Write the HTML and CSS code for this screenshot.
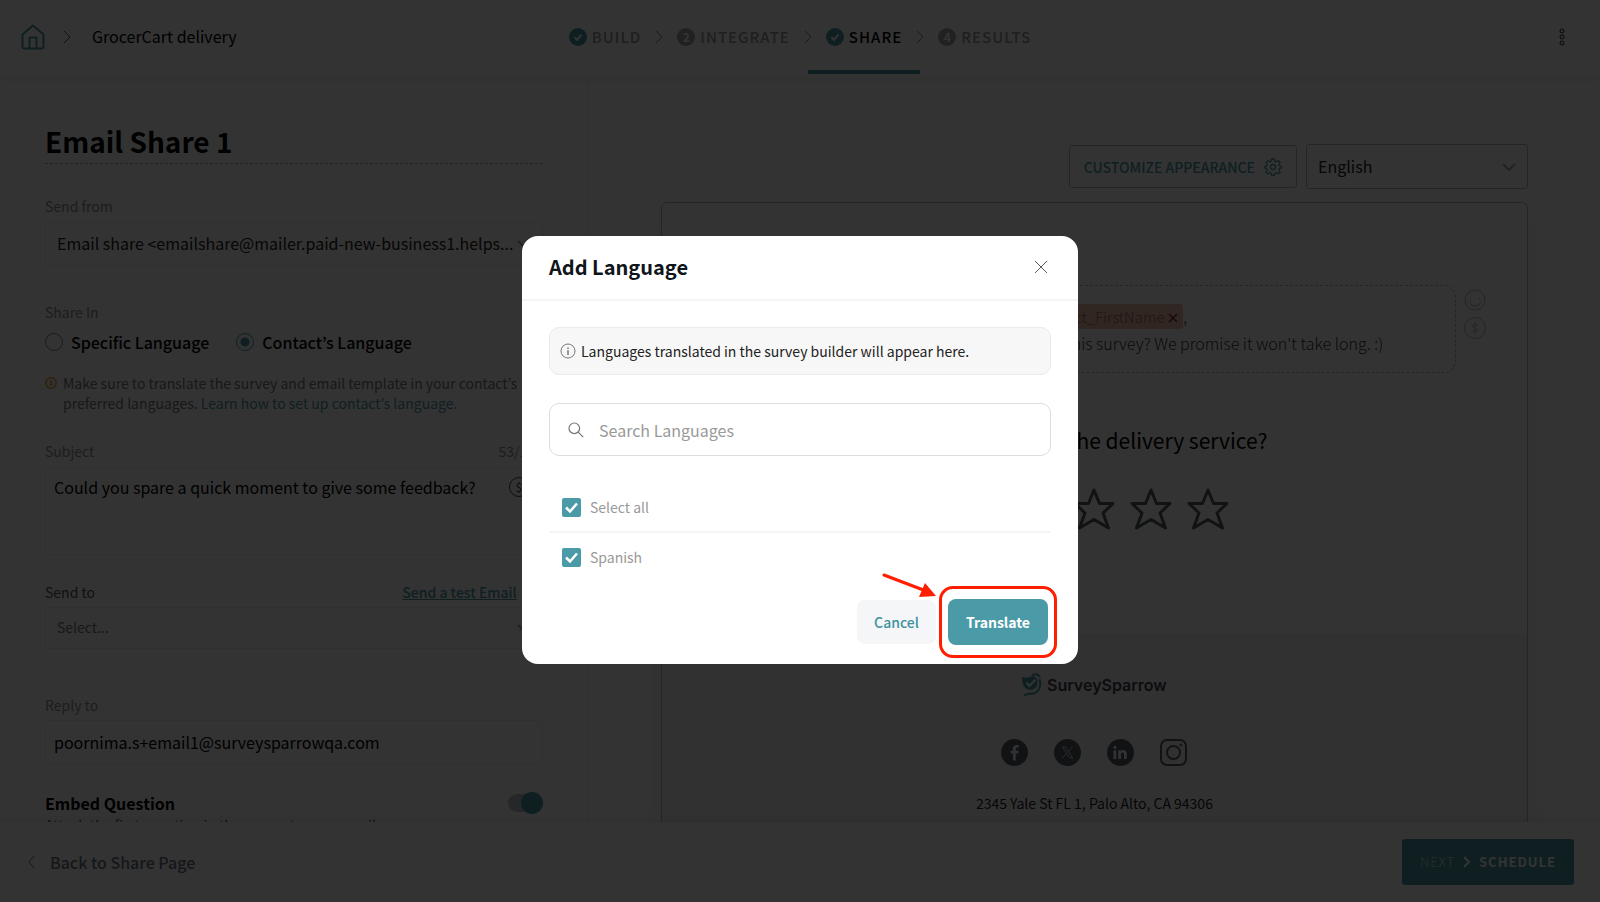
FILE: index.html
```html
<!doctype html>
<html lang="en">
  <head>
    <title>Email Share 1 - GrocerCart delivery</title>
    <meta charset="utf-8">
    <meta name="viewport" content="width=device-width, initial-scale=1">
    <link rel="stylesheet" href="styles.css">
  </head>
  <body>
    <header class="hd-bar">
      <div class="hd-crumbs">
        <a class="hd-home" href="#" aria-label="Home">
          <svg width="24" height="26" viewBox="0 0 24 26" fill="none" stroke="currentColor" stroke-width="2" stroke-linejoin="round"><path d="M1.500 10.500 12 1.500l10.500 9v12a2 2 0 0 1-2 2h-17a2 2 0 0 1-2-2z"/><path d="M8.500 24.500v-11h7v11"/></svg>
        </a>
        <svg class="hd-sep" width="8" height="14" viewBox="0 0 8 14" fill="none" stroke="currentColor"><path d="m1 1 6 6-6 6"/></svg>
        <span class="hd-name">GrocerCart delivery</span>
      </div>
      <nav class="st-steps">
        <a class="st-step" href="#">
          <svg class="st-done" width="18" height="18" viewBox="0 0 18 18"><circle cx="9" cy="9" r="9" fill="currentColor"/><path d="m5.500 9.300 2.500 2.400 4.500-5" fill="none" stroke="#fff" stroke-width="2"/></svg>
          BUILD
        </a>
        <svg class="st-sep" width="8" height="14" viewBox="0 0 8 14" fill="none" stroke="currentColor"><path d="m1 1 6 6-6 6"/></svg>
        <a class="st-step" href="#"><span class="st-num">2</span>INTEGRATE</a>
        <svg class="st-sep" width="8" height="14" viewBox="0 0 8 14" fill="none" stroke="currentColor"><path d="m1 1 6 6-6 6"/></svg>
        <a class="st-step st-current" href="#">
          <svg class="st-done" width="18" height="18" viewBox="0 0 18 18"><circle cx="9" cy="9" r="9" fill="currentColor"/><path d="m5.500 9.300 2.500 2.400 4.500-5" fill="none" stroke="#fff" stroke-width="2"/></svg>
          SHARE
        </a>
        <svg class="st-sep" width="8" height="14" viewBox="0 0 8 14" fill="none" stroke="currentColor"><path d="m1 1 6 6-6 6"/></svg>
        <a class="st-step" href="#"><span class="st-num">4</span>RESULTS</a>
      </nav>
      <button class="hd-more" type="button" aria-label="More">
        <svg width="6" height="18" viewBox="0 0 6 18" fill="none" stroke="currentColor"><circle cx="3" cy="3" r="2"/><circle cx="3" cy="9" r="2"/><circle cx="3" cy="15" r="2"/></svg>
      </button>
    </header>

    <main class="pg-main">
      <form class="fm-panel">
        <h1 class="fm-title">Email Share 1</h1>

        <div class="fm-row">
          <label for="from">Send from</label>
        </div>
        <div class="fm-select">
          <select id="from" class="fm-control">
            <option>Email share &lt;emailshare@mailer.paid-new-business1.helps...</option>
          </select>
          <svg width="14" height="8" viewBox="0 0 14 8" fill="none" stroke="currentColor" stroke-width="2"><path d="m1 1 6 6 6-6"/></svg>
        </div>

        <fieldset class="fm-share">
          <legend>Share In</legend>
          <div class="fm-radios">
            <label><input type="radio" name="share"> Specific Language</label>
            <label><input type="radio" name="share" checked> Contact’s Language</label>
          </div>
        </fieldset>
        <p class="fm-note">
          <svg width="12" height="12" viewBox="0 0 12 12" fill="none" stroke="currentColor" stroke-width="1.500"><circle cx="6" cy="6" r="5.200"/><path d="M7.500 4.300H5.200v1.600h1.700v1.700H4.500M6 3v6" stroke-width="1"/></svg>
          <span>Make sure to translate the survey and email template in your contact’s preferred languages. <a href="#">Learn how to set up contact’s language.</a></span>
        </p>

        <div class="fm-row">
          <label for="subject">Subject</label>
          <span>53/150</span>
        </div>
        <div class="fm-subject">
          <textarea id="subject" class="fm-control">Could you spare a quick moment to give some feedback?</textarea>
          <button type="button" aria-label="Insert variable">$</button>
        </div>

        <div class="fm-row fm-sendto">
          <label for="to">Send to</label>
          <a href="#">Send a test Email</a>
        </div>
        <div class="fm-select fm-to">
          <select id="to" class="fm-control">
            <option>Select...</option>
          </select>
          <svg width="14" height="8" viewBox="0 0 14 8" fill="none" stroke="currentColor" stroke-width="2"><path d="m1 1 6 6 6-6"/></svg>
        </div>

        <div class="fm-row fm-reply">
          <label for="reply">Reply to</label>
        </div>
        <input id="reply" class="fm-control" type="text" value="poornima.s+email1@surveysparrowqa.com">

        <div class="fm-embed">
          <label for="embed">Embed Question</label>
          <input id="embed" class="fm-toggle" type="checkbox" checked>
        </div>
        <p class="fm-help">Attach the first question in the survey to your email.</p>
      </form>

      <section class="pv-panel">
        <div class="pv-tools">
          <button class="pv-customize" type="button">
            CUSTOMIZE APPEARANCE
            <svg width="18" height="18" viewBox="0 0 18 18" fill="none" stroke="currentColor" stroke-width="1.300" stroke-linejoin="round"><path d="M7.700 1h2.600l.5 2.200 1.500.6 2-1.200 1.800 1.800-1.200 2 .6 1.500 2.100.4v1.500l-2.100.8-.6 1.500 1.200 2-1.800 1.800-2-1.200-1.500.6-.5 2.200H7.700l-.5-2.200-1.500-.6-2 1.200-1.800-1.800 1.200-2-.6-1.500L.8 9.800V8.300l1.700-.4.6-1.500-1.200-2 1.800-1.800 2 1.200 1.500-.6z"/><circle cx="9" cy="9" r="2.500"/></svg>
          </button>
          <div class="fm-select pv-lang">
            <select class="fm-control" aria-label="Preview language">
              <option>English</option>
            </select>
            <svg width="14" height="8" viewBox="0 0 14 8" fill="none" stroke="currentColor" stroke-width="2"><path d="m1 1 6 6 6-6"/></svg>
          </div>
        </div>

        <article class="pv-card">
          <div class="pv-message">
            <div class="pv-text">
              <p>Hi <span class="pv-chip">$Contact_FirstName <svg width="10" height="10" viewBox="0 0 10 10" stroke="currentColor" stroke-width="1.500"><path d="m1 1 8 8M9 1 1 9"/></svg></span>,</p>
              <p>Would you mind taking a minute for this survey? We promise it won't take long. :)</p>
            </div>
            <div class="pv-insert">
              <button type="button" aria-label="Insert emoji">
                <svg width="22" height="22" viewBox="0 0 22 22" fill="none" stroke="currentColor"><circle cx="11" cy="11" r="10"/><path d="M5.500 12.500a5.600 5.600 0 0 0 11 0M6 9.500h1M15 9.500h1"/></svg>
              </button>
              <button type="button" aria-label="Insert variable">
                <svg width="22" height="22" viewBox="0 0 22 22" fill="none" stroke="currentColor"><circle cx="11" cy="11" r="10.500"/><path d="M13.500 9c0-1.200-1-2-2.500-2s-2.400.8-2.400 2c0 2.600 5 1.400 5 4 0 1.200-1.100 2-2.600 2s-2.600-.8-2.600-2M11 5.500v11"/></svg>
              </button>
            </div>
          </div>
          <h2 class="pv-question">How good was the delivery service?</h2>
          <div class="pv-stars">
            <svg viewBox="0 0 42 42"><path d="m21 2 5.500 13.500H40L30 25l5.500 15L21 31.500 6.500 40 12 25 2 15.500h13.500z"/></svg>
            <svg viewBox="0 0 42 42"><path d="m21 2 5.500 13.500H40L30 25l5.500 15L21 31.500 6.500 40 12 25 2 15.500h13.500z"/></svg>
            <svg viewBox="0 0 42 42"><path d="m21 2 5.500 13.500H40L30 25l5.500 15L21 31.500 6.500 40 12 25 2 15.500h13.500z"/></svg>
            <svg viewBox="0 0 42 42"><path d="m21 2 5.500 13.500H40L30 25l5.500 15L21 31.500 6.500 40 12 25 2 15.500h13.500z"/></svg>
            <svg viewBox="0 0 42 42"><path d="m21 2 5.500 13.500H40L30 25l5.500 15L21 31.500 6.500 40 12 25 2 15.500h13.500z"/></svg>
          </div>
          <footer class="pv-footer">
            <div class="pv-brand">
              <svg width="20" height="24" viewBox="0 0 20 24" fill="none"><path d="M0 4c4 1.500 7 .5 9-.5 3-1 6 .5 6.500 4 .6 5.500-2.500 9.500-7.500 9.500C3 17 0 12 0 4z" fill="#4a9ba7"/><path d="M10 2.500c2.500-2 6-2 8 1.500M17.500 6c2 6 0 14-8 14.800C5 21 3.500 21 2 23" stroke="#4a9ba7" stroke-width="2"/><path d="m4.500 9.500 3 3.500 6-6.500" stroke="#fff" stroke-width="2"/></svg>
              SurveySparrow
            </div>
            <div class="pv-social">
              <a href="#" aria-label="Facebook"><svg width="27" height="27" viewBox="0 0 27 27"><circle cx="13.500" cy="13.500" r="13.500" fill="#555b66"/><path d="M14.800 21.500v-7h2.300l.4-2.800h-2.700v-1.600c0-.9.400-1.500 1.500-1.500h1.300V6.100c-3.500-.6-5.700.5-5.700 3.500v2.100H9.700v2.800h2.200v7z" fill="#f7f7f7"/></svg></a>
              <a href="#" aria-label="X"><svg width="27" height="27" viewBox="0 0 27 27"><circle cx="13.500" cy="13.500" r="13.500" fill="#555b66"/><path d="M8.300 8h2.900l7.500 11h-2.900zM18.300 8l-4.200 4.800M12.600 14.300 8.500 19" fill="none" stroke="#ddd"/></svg></a>
              <a href="#" aria-label="LinkedIn"><svg width="27" height="27" viewBox="0 0 27 27"><circle cx="13.500" cy="13.500" r="13.500" fill="#555b66"/><path d="M6.500 11.200h2.700V20H6.500zM11.200 11.200h2.600v1.200c1.500-2.200 6-1.900 6 2.400V20H17v-4.700c0-2.500-3-2.400-3 0V20h-2.800z" fill="#f7f7f7"/><circle cx="7.900" cy="8.400" r="1.600" fill="#f7f7f7"/></svg></a>
              <a href="#" aria-label="Instagram"><svg width="27" height="27" viewBox="0 0 27 27" fill="none" stroke="#555b66" stroke-width="2"><rect x="1" y="1" width="25" height="25" rx="6"/><circle cx="13.500" cy="13.500" r="6.500"/><circle cx="21" cy="6" r=".5"/></svg></a>
            </div>
            <p class="pv-address">2345 Yale St FL 1, Palo Alto, CA 94306</p>
          </footer>
        </article>
      </section>
    </main>

    <footer class="ft-bar">
      <a class="ft-back" href="#">
        <svg width="7" height="14" viewBox="0 0 7 14" fill="none" stroke="currentColor"><path d="M6 1 1 7l5 6"/></svg>
        Back to Share Page
      </a>
      <button class="ft-next" type="button">
        <span>NEXT</span>
        <svg width="8" height="12" viewBox="0 0 8 12" fill="none" stroke="currentColor" stroke-width="2"><path d="m1 1 5 5-5 5"/></svg>
        <b>SCHEDULE</b>
      </button>
    </footer>

    <div class="md-overlay">
      <div class="md-dialog" role="dialog" aria-modal="true" aria-labelledby="md-title">
        <header class="md-head">
          <h2 id="md-title">Add Language</h2>
          <button class="md-close" type="button" aria-label="Close">
            <svg width="14" height="14" viewBox="0 0 14 14" fill="none" stroke="currentColor"><path d="m1 1 12 12M13 1 1 13"/></svg>
          </button>
        </header>
        <div class="md-body">
          <p class="md-info">
            <svg width="16" height="16" viewBox="0 0 16 16" fill="none" stroke="currentColor"><circle cx="8" cy="8" r="7"/><path d="M8 7.200V12M8 4.500V6" stroke-width="1.500"/></svg>
            Languages translated in the survey builder will appear here.
          </p>
          <label class="md-search">
            <svg width="16" height="16" viewBox="0 0 16 16" fill="none" stroke="currentColor" stroke-width="1.200"><circle cx="6.300" cy="6.300" r="5.300"/><path d="m10.200 10.200 5 5"/></svg>
            <input type="text" placeholder="Search Languages" aria-label="Search Languages">
          </label>
          <ul class="md-list">
            <li><label><input type="checkbox" checked> Select all</label></li>
            <li><label><input type="checkbox" checked> Spanish</label></li>
          </ul>
        </div>
        <div class="md-actions">
          <button class="md-cancel" type="button">Cancel</button>
          <div class="md-callout">
            <svg class="md-arrow" width="56" height="26" viewBox="0 0 56 26"><path d="m2 3 42 16" stroke="#ff1e00" stroke-width="3" stroke-linecap="round"/><path d="m43 11 11 13-17 1z" fill="#ff1e00"/></svg>
            <button class="md-translate" type="button">Translate</button>
          </div>
        </div>
      </div>
    </div>
  </body>
</html>
```

FILE: styles.css
```css
* {
  box-sizing: border-box;
}
body {
  display: flex;
  flex-direction: column;
  height: 100vh;
  margin: 0;
  overflow: hidden;
  background-color: #fff;
  color: #000;
  font-family: 'Noto Sans CJK KR', 'Noto Sans', sans-serif;
  font-size: 16px;
  line-height: 24px;
}
h1,
h2,
p,
ul,
fieldset {
  margin: 0;
  padding: 0;
  border: 0;
}
svg {
  flex: none;
}
a {
  color: #4a9ba7;
  text-decoration: none;
}
button,
input,
select,
textarea {
  font: inherit;
  color: inherit;
}
button {
  padding: 0;
  border: 0;
  background: none;
  cursor: pointer;
}
.hd-bar {
  display: grid;
  grid-template-columns: 1fr auto 1fr;
  flex: none;
  height: 77px;
  padding: 0 21px;
  box-shadow: 0 2px 8px rgba(0, 0, 0, 0.08);
  position: relative;
}
.hd-crumbs {
  display: flex;
  align-items: center;
  height: 74px;
}
.hd-home {
  display: flex;
}
.hd-sep {
  margin: 0 21px 0 18px;
  color: #555;
}
.hd-name {
  padding-bottom: 2px;
}
.hd-more {
  display: flex;
  align-items: center;
  justify-self: end;
  height: 74px;
  margin-right: 14px;
  color: #222;
}
.st-steps {
  display: flex;
  align-items: center;
  height: 74px;
}
.st-step {
  display: flex;
  align-items: center;
  gap: 5px;
  height: 74px;
  padding: 4px 18px 0;
  border-bottom: 4px solid transparent;
  color: #999;
  font-size: 15px;
  font-weight: 500;
  letter-spacing: 1px;
}
.st-current {
  border-color: #4a9ba7;
  color: #000;
}
.st-done {
  color: #4a9ba7;
}
.st-num {
  width: 18px;
  height: 18px;
  border-radius: 50%;
  background-color: #a5a5a5;
  color: #fff;
  font-size: 12px;
  font-weight: 700;
  line-height: 17px;
  letter-spacing: 0;
  text-align: center;
}
.st-sep {
  margin: 0 -4px;
  color: #888;
}
.pg-main {
  display: flex;
  flex: 1;
  min-height: 0;
  overflow: hidden;
}
.fm-panel {
  flex: 0 0 36.8%;
  padding: 45px 45px 0;
  border-right: 1px solid #eee;
}
.fm-title {
  margin-bottom: 32px;
  padding-bottom: 3px;
  border-bottom: 1px dashed #aaa;
  font-size: 28px;
  line-height: 38px;
}
.fm-row {
  display: flex;
  justify-content: space-between;
  margin-bottom: 6px;
  color: #8f8f8f;
  font-size: 14px;
  line-height: 20px;
}
.fm-control {
  display: block;
  width: 100%;
  height: 44px;
  padding: 0 8px;
  border: 1px solid #eee;
  border-radius: 3px;
  background-color: #fff;
}
.fm-select {
  position: relative;
}
.fm-select select {
  appearance: none;
  padding: 0 20px 2px 11px;
  color: #222;
}
.fm-select svg {
  position: absolute;
  top: 50%;
  right: 12px;
  margin-top: -4px;
  color: #aaa;
}
.fm-share {
  margin-top: 36px;
}
.fm-share legend {
  padding: 0;
  color: #8f8f8f;
  font-size: 14px;
  line-height: 20px;
}
.fm-radios {
  display: flex;
  gap: 27px;
  margin-top: 8px;
  font-weight: 500;
}
.fm-radios label {
  display: flex;
  align-items: center;
  gap: 8px;
}
.fm-radios input {
  appearance: none;
  width: 18px;
  height: 18px;
  margin: 0;
  border: 1px solid #888;
  border-radius: 50%;
}
.fm-radios input:checked {
  border-color: #4a9ba7;
  background: radial-gradient(#4a9ba7 0 4px, #fff 5px);
}
.fm-note {
  display: flex;
  gap: 6px;
  margin: 19px 0 28px;
  color: #777;
  font-size: 14px;
  line-height: 20px;
}
.fm-note span {
  flex: 1;
}
.fm-note svg {
  margin-top: 4px;
  color: #e69a2e;
}
.fm-subject {
  position: relative;
}
.fm-subject textarea {
  height: 88px;
  padding: 7px 40px 7px 8px;
  resize: none;
}
.fm-subject button {
  position: absolute;
  top: 10px;
  right: 14px;
  width: 20px;
  height: 20px;
  border: 1px solid #444;
  border-radius: 50%;
  color: #444;
  font-size: 12px;
  line-height: 18px;
}
.fm-sendto {
  margin-top: 27px;
  margin-bottom: 5px;
  color: #555;
}
.fm-sendto a {
  margin-right: 26px;
  font-weight: 500;
  text-decoration: underline;
}
.fm-to select {
  height: 42px;
  color: #777;
  font-size: 14px;
}
.fm-reply {
  margin-top: 46px;
  margin-bottom: 5px;
}
.fm-embed {
  display: flex;
  align-items: center;
  justify-content: space-between;
  margin-top: 27px;
  font-weight: 700;
}
.fm-toggle {
  appearance: none;
  display: flex;
  align-items: center;
  justify-content: flex-end;
  width: 35px;
  height: 18px;
  margin: 0;
  border-radius: 9px;
  background-color: #b9c0cc;
}
.fm-toggle::before {
  content: '';
  width: 22px;
  height: 22px;
  border-radius: 50%;
  background-color: #4a9ba7;
}
.fm-help {
  color: #555;
  font-size: 14px;
  line-height: 20px;
}
.pv-panel {
  flex: 1;
  padding: 67px 72px 0;
}
.pv-tools {
  display: flex;
  align-items: center;
  justify-content: flex-end;
  gap: 9px;
  margin-bottom: 13px;
}
.pv-customize {
  display: flex;
  align-items: center;
  gap: 9px;
  height: 43px;
  padding: 0 14px;
  border: 1px solid #bbb;
  border-radius: 3px;
  color: #4a9ba7;
  font-size: 14px;
  font-weight: 500;
}
.pv-lang {
  width: 222px;
}
.pv-lang select {
  height: 45px;
  border-color: #bbb;
}
.pv-card {
  border: 1px solid #bbb;
  border-radius: 6px;
  box-shadow: 0 10px 40px rgba(0, 0, 0, 0.05);
}
.pv-message {
  display: flex;
  gap: 8px;
  margin: 82px 41px 0 71px;
}
.pv-text {
  flex: 1;
  padding: 17px 16px 15px;
  border: 1px dashed #bbb;
  border-radius: 12px;
  color: #333;
  font-weight: 300;
  line-height: 27px;
  text-align: center;
}
.pv-chip {
  display: inline-block;
  padding: 0 5px;
  border-radius: 3px;
  background-color: #f0c0ac;
  color: #b0604c;
  font-size: 15px;
  line-height: 25px;
}
.pv-chip svg {
  color: #7a2d1c;
}
.pv-insert {
  display: flex;
  flex-direction: column;
  gap: 6px;
  padding-top: 4px;
}
.pv-insert button {
  display: flex;
  color: #b5b5b5;
}
.pv-question {
  margin-top: 52px;
  font-size: 21px;
  font-weight: 400;
  line-height: 30px;
  text-align: center;
}
.pv-stars {
  display: flex;
  justify-content: center;
  gap: 15px;
  margin: 33px 0 104px;
}
.pv-stars svg {
  width: 42px;
  height: 42px;
  fill: none;
  stroke: #555b60;
  stroke-width: 3px;
  stroke-linejoin: round;
}
.pv-footer {
  padding: 38px 0;
  background-color: #f5f5f5;
  text-align: center;
}
.pv-brand {
  display: flex;
  align-items: center;
  justify-content: center;
  gap: 5px;
  margin-bottom: 41px;
  color: #3d4150;
  font-family: Inter, sans-serif;
  font-size: 16px;
  font-weight: 600;
  line-height: 26px;
}
.pv-social {
  display: flex;
  justify-content: center;
  gap: 26px;
  margin-bottom: 27px;
}
.pv-social a {
  display: flex;
}
.pv-address {
  color: #222;
  font-size: 14px;
  line-height: 20px;
}
.ft-bar {
  display: flex;
  align-items: center;
  justify-content: space-between;
  flex: none;
  height: 80px;
  padding: 0 26px 0 28px;
  background-color: #fff;
  box-shadow: 0 -2px 8px rgba(0, 0, 0, 0.08);
  position: relative;
}
.ft-back {
  display: flex;
  align-items: center;
  gap: 15px;
  color: #6b7280;
  font-weight: 500;
}
.ft-next {
  display: flex;
  align-items: center;
  gap: 8px;
  height: 46px;
  padding: 0 18px;
  border-radius: 3px;
  background-color: #4a9ba7;
  color: #fff;
  font-size: 13px;
  letter-spacing: 1px;
}
.ft-next span {
  font-weight: 300;
  opacity: 0.7;
}
.md-overlay {
  position: fixed;
  inset: 0;
  display: flex;
  align-items: center;
  justify-content: center;
  padding-bottom: 2px;
  background-color: rgba(0, 0, 0, 0.8);
}
.md-dialog {
  width: 556px;
  border-radius: 16px;
  background-color: #fff;
}
.md-head {
  display: flex;
  align-items: center;
  justify-content: space-between;
  padding: 17px 30px 18px 27px;
  border-bottom: 2px solid #f5f5f5;
  color: #10151c;
}
.md-head h2 {
  font-size: 20px;
  line-height: 28px;
}
.md-close {
  display: flex;
  color: #555b60;
}
.md-body {
  padding: 26px 27px 0;
}
.md-info {
  display: flex;
  align-items: center;
  gap: 5px;
  padding: 12px 10px;
  border: 1px solid #ebebeb;
  border-radius: 10px;
  background-color: #f7f7f7;
  color: #222;
  font-size: 14px;
  line-height: 22px;
}
.md-info svg {
  color: #777;
}
.md-search {
  display: flex;
  align-items: center;
  gap: 15px;
  height: 53px;
  margin: 28px 0 27px;
  padding: 0 18px;
  border: 1px solid #ddd;
  border-radius: 10px;
  color: #777;
}
.md-search input {
  flex: 1;
  padding: 0;
  border: 0;
  outline: 0;
}
.md-search input::placeholder {
  color: #999;
}
.md-list {
  list-style: none;
}
.md-list li {
  padding: 12px 13px;
  color: #999;
  font-size: 14px;
  line-height: 24px;
}
.md-list li:first-child {
  border-bottom: 2px solid #f5f5f5;
}
.md-list label {
  display: flex;
  align-items: center;
  gap: 9px;
}
.md-list input {
  appearance: none;
  width: 19px;
  height: 19px;
  margin: 0;
  border-radius: 2px;
  background: #4a9ba7 url("data:image/svg+xml,%3Csvg xmlns='http://www.w3.org/2000/svg' viewBox='0 0 19 19'%3E%3Cpath d='m4 9.500 4 4 7-8' fill='none' stroke='%23fff' stroke-width='2.500'/%3E%3C/svg%3E");
}
.md-actions {
  display: flex;
  align-items: center;
  justify-content: flex-end;
  gap: 3px;
  padding: 5px 21px 6px;
}
.md-cancel {
  height: 44px;
  padding: 0 17px;
  border-radius: 8px;
  background-color: #f4f6f8;
  color: #3f929d;
  font-size: 14px;
  font-weight: 500;
}
.md-callout {
  position: relative;
  padding: 10px 6px;
  border: 3px solid #ff1e00;
  border-radius: 14px;
}
.md-arrow {
  position: absolute;
  top: -17px;
  left: -60px;
}
.md-translate {
  display: block;
  height: 46px;
  padding: 0 18px;
  border-radius: 8px;
  background-color: #4a9ba7;
  color: #fff;
  font-size: 14px;
  font-weight: 700;
}
```
